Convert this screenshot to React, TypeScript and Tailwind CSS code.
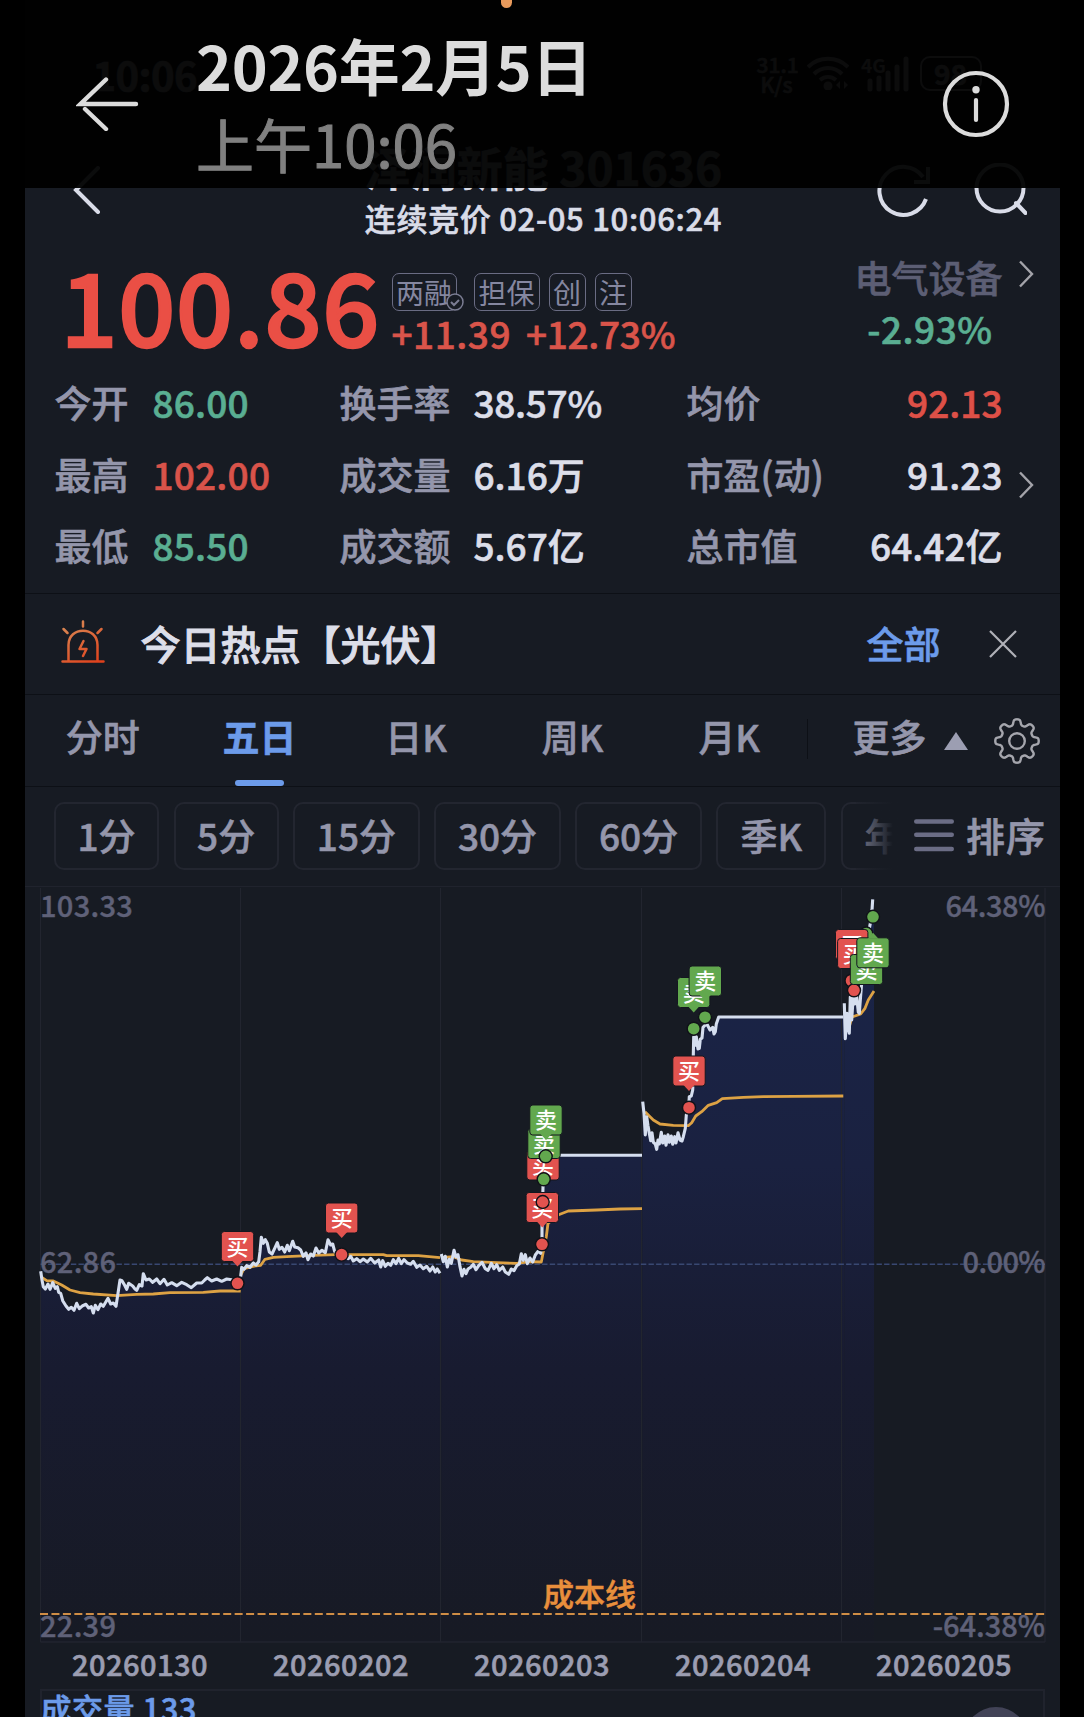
import type { ReactNode } from "react";
import clsx from "clsx";

type Point = [number, number];

type Day = {
  origin: Point;
  price: Point[];
  average: Point[];
};

type Marker = {
  side: "buy" | "sell";
  x: number;
  y: number;
  tip?: "up" | "down" | "none";
};

const CHART_BOTTOM = 1642;
const GRID_X = [40.5, 240.5, 440.5, 641.5, 841.5, 1045];

// points are stored in thirds of a pixel, counted from the day's origin
const days: Day[] = [
  {
    origin: [20, 1180],
    price: [
      [62, 274], [66, 300], [70, 320], [76, 327], [84, 312], [90, 328], [98, 308], [106, 325], [112, 320],
      [116, 337], [122, 340], [128, 362], [138, 378], [146, 388], [154, 382], [162, 391], [170, 370], [178, 386],
      [188, 377], [198, 373], [206, 384], [214, 380], [220, 399], [226, 376], [234, 389], [242, 372], [250, 379],
      [264, 355], [272, 372], [280, 369], [288, 379], [294, 340], [300, 300], [306, 302], [314, 316], [320, 328],
      [326, 310], [338, 318], [344, 326], [350, 331], [358, 314], [366, 318], [370, 281], [378, 300], [388, 297],
      [398, 307], [410, 297], [420, 311], [432, 298], [442, 315], [455, 308], [470, 317], [485, 307], [500, 314],
      [514, 323], [530, 309], [545, 309], [554, 300], [562, 293], [575, 303], [590, 297], [605, 304], [620, 297],
      [640, 300], [655, 300],
    ],
    average: [
      [62, 290], [80, 302], [100, 303], [125, 315], [150, 330], [180, 338], [220, 342], [290, 347], [350, 343],
      [400, 342], [450, 338], [550, 337], [600, 333], [662, 333],
    ],
  },
  {
    origin: [20, 1180],
    price: [
      [662, 290], [665, 262], [672, 268], [680, 257], [690, 262], [700, 249], [708, 255], [716, 245], [720, 215],
      [724, 172], [730, 190], [736, 179], [742, 190], [748, 216], [756, 222], [764, 205], [772, 188], [778, 208],
      [786, 202], [794, 216], [802, 196], [808, 212], [818, 184], [824, 201], [834, 203], [842, 210], [850, 229],
      [858, 219], [864, 239], [872, 222], [880, 228], [888, 204], [896, 219], [906, 211], [916, 218], [924, 179],
      [932, 195], [938, 192], [944, 215], [965, 225], [985, 236], [992, 229], [1000, 243], [1010, 236], [1020, 245],
      [1030, 237], [1042, 246], [1052, 235], [1064, 249], [1076, 240], [1082, 261], [1088, 242], [1096, 259],
      [1104, 250], [1112, 256], [1120, 239], [1128, 251], [1136, 235], [1144, 251], [1152, 239], [1162, 249],
      [1172, 253], [1180, 244], [1190, 262], [1200, 255], [1210, 266], [1220, 259], [1230, 273], [1238, 261],
      [1246, 276], [1252, 267], [1260, 280],
    ],
    average: [
      [662, 285], [672, 266], [700, 259], [722, 256], [735, 238], [760, 232], [800, 230], [880, 226], [945, 224],
      [1090, 224], [1100, 227], [1195, 227], [1260, 233],
    ],
  },
  {
    origin: [330, 1080],
    price: [
      [334, 522], [340, 545], [346, 529], [352, 561], [358, 538], [364, 550], [372, 511], [378, 531], [384, 524],
      [390, 560], [396, 588], [402, 568], [408, 581], [414, 567], [422, 562], [430, 553], [438, 569], [446, 557],
      [456, 547], [466, 566], [474, 571], [484, 550], [492, 566], [500, 554], [508, 571], [518, 561], [526, 576],
      [536, 583], [544, 567], [552, 572], [560, 557], [568, 552], [574, 521], [580, 541], [586, 524], [592, 551],
      [600, 534], [608, 546], [616, 525], [624, 514], [632, 520], [636, 493], [636, 440], [639, 320], [644, 229],
      [650, 226], [936, 226],
    ],
    average: [
      [334, 533], [370, 530], [395, 540], [430, 545], [500, 548], [560, 550], [600, 545], [634, 546], [639, 520],
      [649, 470], [654, 430], [686, 404], [715, 393], [800, 390], [870, 387], [936, 386],
    ],
  },
  {
    origin: [630, 940],
    price: [
      [38, 485], [42, 520], [46, 585], [50, 530], [54, 557], [58, 580], [62, 602], [66, 578], [70, 607], [76, 612],
      [80, 628], [84, 600], [88, 612], [94, 577], [98, 609], [104, 588], [108, 616], [114, 584], [118, 607],
      [124, 588], [128, 613], [134, 590], [138, 609], [144, 578], [150, 600], [156, 603], [160, 590], [166, 565],
      [169, 525], [176, 503], [178, 470], [184, 468], [188, 450], [190, 400], [190, 345], [191, 290], [195, 316],
      [199, 290], [204, 327], [208, 325], [211, 298], [216, 294], [219, 262], [226, 255], [232, 254], [240, 270],
      [248, 262], [252, 282], [256, 275], [259, 252], [266, 231], [640, 231],
    ],
    average: [
      [45, 515], [60, 530], [70, 540], [90, 552], [130, 556], [175, 557], [185, 548], [197, 528], [215, 515],
      [235, 496], [260, 488], [277, 476], [340, 472], [400, 470], [490, 469], [640, 468],
    ],
  },
  {
    origin: [800, 880],
    price: [
      [133, 370], [136, 476], [141, 400], [144, 440], [148, 460], [151, 350], [155, 420], [160, 345], [164, 372],
      [170, 350], [175, 396], [178, 400], [182, 345], [190, 250], [200, 190], [211, 130], [216, 90], [218, 58],
    ],
    average: [[148, 440], [156, 411], [182, 402], [195, 385], [205, 360], [222, 333]],
  },
];

// y is the top edge of the flag
const flags: Marker[] = [
  { side: "buy", x: 237.5, y: 1231.5 },
  { side: "buy", x: 341.7, y: 1203 },
  { side: "buy", x: 542.3, y: 1192.5 },
  { side: "buy", x: 543, y: 1150, tip: "none" },
  { side: "sell", x: 544, y: 1128.5, tip: "none" },
  { side: "sell", x: 546, y: 1105 },
  { side: "buy", x: 689, y: 1056 },
  { side: "sell", x: 693.7, y: 977.5 },
  { side: "sell", x: 705.3, y: 966 },
];

const lateFlags: Marker[] = [
  { side: "buy", x: 851.7, y: 929.5, tip: "none" },
  { side: "buy", x: 853.8, y: 938.5, tip: "none" },
  { side: "sell", x: 866.5, y: 954.5, tip: "none" },
  { side: "sell", x: 873, y: 937.8, tip: "up" },
];

const dots: Marker[] = [
  { side: "buy", x: 237.5, y: 1283.3 },
  { side: "buy", x: 341.6, y: 1254.6 },
  { side: "buy", x: 542, y: 1244.3 },
  { side: "buy", x: 542.7, y: 1202 },
  { side: "sell", x: 543.7, y: 1179.3 },
  { side: "sell", x: 545.7, y: 1156.3 },
  { side: "buy", x: 689, y: 1107.7 },
  { side: "sell", x: 693.7, y: 1028.7 },
  { side: "sell", x: 705, y: 1017.2 },
];

const lateDots: Marker[] = [
  { side: "buy", x: 851.5, y: 980.7 },
  { side: "buy", x: 854, y: 990.3 },
  { side: "sell", x: 866.3, y: 933.5 },
  { side: "sell", x: 873, y: 916.8 },
];

const fills = { buy: "#e2534f", sell: "#62a84e" };

function toPath(points: Point[], [ox, oy]: Point) {
  return points
    .map(([x, y], i) => `${i ? "L" : "M"}${(ox + x / 3).toFixed(1)} ${(oy + y / 3).toFixed(1)}`)
    .join("");
}

function firstX({ origin, price }: Day) {
  return origin[0] + price[0][0] / 3;
}

function toArea(day: Day, index: number) {
  const next = days[index + 1];
  const right = next ? firstX(next) : 874;
  return `${toPath(day.price, day.origin)}H${right}V${CHART_BOTTOM}H${firstX(day)}Z`;
}

function Flag({ side, x, y, tip = "down" }: Marker) {
  return (
    <g>
      <rect x={x - 16.2} y={y} width="32.4" height="30" rx="3" fill={fills[side]} stroke="#14171f" strokeWidth="1" />
      {tip === "down" && <path d={`M${x - 5.5} ${y + 29}l5.5 6l5.5 -6z`} fill={fills[side]} />}
      {tip === "up" && <path d={`M${x - 5.5} ${y + 1}l5.5 -6l5.5 6z`} fill={fills[side]} />}
      <text x={x} y={y + 23} fontSize="22" fontWeight="500" textAnchor="middle" fill="#fff">
        {side === "buy" ? "买" : "卖"}
      </text>
    </g>
  );
}

function Dot({ side, x, y }: Marker) {
  return <circle cx={x} cy={y} r="6.5" fill={fills[side]} stroke="#101218" strokeWidth="1.4" />;
}

function Chevron({ className }: { className?: string }) {
  return (
    <svg viewBox="0 0 16 28" className={clsx("h-7 w-4", className)} fill="none" stroke="#a3a3a9" strokeWidth="2.4">
      <path d="M2 1.5L14 14L2 26.5" />
    </svg>
  );
}

function StatusBar() {
  return (
    <div className="flex h-[132px] shrink-0 items-start justify-between pr-[78px] pl-[68px] text-[#dfe2ec]">
      <span className="mt-[46px] text-[40px] leading-[56px] font-bold tracking-[-0.6px]">10:06</span>
      <div className="mt-[54px] flex items-start">
        <div className="mr-2.5 w-10 text-center text-[21px] leading-5 font-medium">
          <div>31.1</div>
          <div>K/s</div>
        </div>
        <svg viewBox="0 0 42 36" className="mr-3 h-9 w-[42px]" fill="none" stroke="currentColor" strokeWidth="4">
          <path d="M1 13C12 2 30 2 41 13M7 20C15 12 27 12 35 20M13 26C18 22 24 22 29 26" />
          <circle cx="21" cy="32" r="2.5" fill="currentColor" />
          <path d="M33 27v8l-4 -4zM37 27v8l4 -4z" fill="currentColor" stroke="none" />
        </svg>
        <svg viewBox="0 0 49 38" className="mr-2.5 h-[38px] w-[49px]" fill="none" stroke="currentColor" strokeWidth="5">
          <text x="0" y="19" fontSize="19" fontWeight="700" fill="currentColor" stroke="none">
            4G
          </text>
          <path d="M9 27V35M18 24V35M27 19V35M36 13V35M45 5V35" strokeLinecap="round" />
        </svg>
        <div className="mt-0.5 h-[35px] w-[62px] rounded-[10px] border-2 border-current text-center text-[28px] leading-[30px] font-bold">
          98
        </div>
      </div>
    </div>
  );
}

function NavBar() {
  return (
    <div className="grid h-[114px] shrink-0 grid-cols-[1fr_auto_1fr] items-center pr-[33px] pl-[48px] text-[#d9dce8]">
      <svg viewBox="0 0 28 48" className="h-12 w-7" fill="none" stroke="currentColor" strokeWidth="4" strokeLinecap="round">
        <path d="M25 2L3 24L25 46" />
      </svg>
      <div className="mr-[12px] pt-[11px] text-center">
        <h1 className="text-[46px] leading-[46px] font-bold whitespace-nowrap">泽润新能 301636</h1>
        <p className="text-[31px] leading-[58px] font-medium tracking-[0.7px] whitespace-nowrap">
          连续竞价 02-05 10:06:24
        </p>
      </div>
      <div className="flex items-center justify-end gap-[43px]">
        <svg viewBox="0 0 54 54" className="h-[54px] w-[54px]" fill="none" stroke="currentColor" strokeWidth="4">
          <path d="M50 36A24 24 0 1 1 47 14" />
          <path d="M52 4V19H38" />
        </svg>
        <svg viewBox="0 0 54 54" className="h-[54px] w-[54px]" fill="none" stroke="currentColor" strokeWidth="4">
          <circle cx="27" cy="25" r="23.5" />
          <path d="M43 40L52.5 50" strokeLinecap="round" />
        </svg>
      </div>
    </div>
  );
}

function Tag({ children, className }: { children: ReactNode; className?: string }) {
  return (
    <span
      className={clsx(
        "relative flex h-[38px] items-center justify-center rounded-[7px] border-[1.5px] border-[#6a6c83] text-[28px] leading-none font-normal text-[#8587a0] [-webkit-text-stroke-width:0]",
        className
      )}
    >
      {children}
    </span>
  );
}

const stats = [
  ["今开", "86.00", "text-[#5aae92]", "换手率", "38.57%", "均价", "92.13", "text-[#de5047]"],
  ["最高", "102.00", "text-[#d9534a]", "成交量", "6.16万", "市盈(动)", "91.23", "text-[#dcdee9]"],
  ["最低", "85.50", "text-[#5aae92]", "成交额", "5.67亿", "总市值", "64.42亿", "text-[#dcdee9]"],
];

function Quote() {
  return (
    <section className="relative h-[348px] shrink-0 border-b border-[#0d1016]">
      <div className="flex h-[121px] pl-[36px]">
        <div className="w-[331px] text-[100px] leading-[115px] font-medium tracking-[0.8px] text-[#ea4f45] [-webkit-text-stroke-width:2.4px]">
          100.86
        </div>
        <div className="pt-[27px]">
          <div className="flex gap-[9px]">
            <Tag className="w-[65px]">
              两融
              <svg viewBox="0 0 18 18" className="absolute -right-2 -bottom-px h-[18px] w-[18px]" fill="#171b23" stroke="#7b7d93" strokeWidth="1.5">
                <circle cx="9" cy="9" r="8" />
                <path d="M5 9l3 3l5 -5" fill="none" strokeWidth="2" />
              </svg>
            </Tag>
            <Tag className="ml-2 w-[66px]">担保</Tag>
            <Tag className="w-[37px]">创</Tag>
            <Tag className="w-[37px]">注</Tag>
          </div>
          <div className="flex gap-[15px] text-[37px] leading-[44px] font-medium text-[#d9544a]">
            <span className="tracking-[0.5px]">+11.39</span>
            <span className="tracking-[-0.3px]">+12.73%</span>
          </div>
        </div>
        <div className="mr-[57px] ml-auto pt-3 text-right">
          <div className="text-[37px] leading-[38px] font-medium text-[#5c5e74]">电气设备</div>
          <div className="mr-[10px] text-[37px] leading-[64px] font-medium tracking-[0.5px] text-[#5aae92]">-2.93%</div>
        </div>
      </div>
      <div className="pr-[57px] pl-[30px]">
        {stats.map(([l1, v1, c1, l2, v2, l3, v3, c3]) => (
          <div
            key={l1}
            className="grid h-[71.6px] grid-cols-[98px_187px_134px_213px_auto_1fr] items-center text-[37px] leading-none font-medium whitespace-nowrap text-[#dcdee9]"
          >
            <span className="text-[#9496ab]">{l1}</span>
            <span className={clsx("tracking-[0.2px]", c1)}>{v1}</span>
            <span className="text-[#9496ab]">{l2}</span>
            <span className={clsx(v2.endsWith("%") && "tracking-[-0.3px]")}>{v2}</span>
            <span className="text-[#9496ab]">{l3}</span>
            <span className={clsx("text-right", c3)}>{v3}</span>
          </div>
        ))}
      </div>
      <Chevron className="absolute top-[14px] right-[26px]" />
      <Chevron className="absolute top-[225px] right-[26px]" />
    </section>
  );
}

function HotTopic() {
  return (
    <section className="flex h-[101px] shrink-0 items-center border-b border-[#0d1016] pr-[43px] pl-[36px]">
      <svg viewBox="0 0 44 44" className="mr-[36px] mb-1 h-11 w-11" fill="none" stroke="url(#alarm)" strokeWidth="2.5" strokeLinecap="round">
        <defs>
          <linearGradient id="alarm" gradientUnits="userSpaceOnUse" x1="10" y1="0" x2="34" y2="44">
            <stop offset="0" stopColor="#d98a55" />
            <stop offset="1" stopColor="#e0411c" />
          </linearGradient>
        </defs>
        <path d="M1.5 41.5H42.5M7.5 41V25C7.5 6 36.5 6 36.5 25V41M22 1.5V6.5M2.5 9L6.5 13M40.5 9L36.5 13" />
        <path d="M22.5 21L18.5 29H25.5L22 36" strokeLinejoin="round" />
      </svg>
      <h2 className="pb-0.5 text-[40px] leading-none font-medium text-[#dcdee9] [-webkit-text-stroke-width:1px]">
        今日热点【光伏】
      </h2>
      <span className="mr-[48px] ml-auto pb-0.5 text-[37px] leading-none font-medium text-[#6c9bea]">全部</span>
      <svg viewBox="0 0 28 28" className="h-7 w-7" fill="none" stroke="#b0b1b8" strokeWidth="2.2">
        <path d="M1 1L27 27M27 1L1 27" />
      </svg>
    </section>
  );
}

function gearPath() {
  // eight rounded teeth around a circle
  const points: string[] = [];
  for (let i = 0; i <= 160; i++) {
    const angle = (i / 160) * Math.PI * 2;
    const wave = Math.cos(angle * 8);
    const radius = 18.9 + 2.9 * Math.tanh(wave * 2);
    points.push(`${(24 + radius * Math.sin(angle)).toFixed(2)} ${(24 - radius * Math.cos(angle)).toFixed(2)}`);
  }
  return `M${points.join("L")}Z`;
}

function Tabs() {
  return (
    <nav className="flex h-[92px] shrink-0 items-center border-b border-[#0d1016] pr-[19px] text-[37px] leading-none font-medium text-[#9496ab]">
      {["分时", "五日", "日K", "周K", "月K"].map((tab) => (
        <div
          key={tab}
          className={clsx(
            "relative flex h-full w-[156.6px] items-center justify-center pb-2",
            tab === "五日" && "font-bold text-[#6c9bea]"
          )}
        >
          {tab}
          {tab === "五日" && <span className="absolute bottom-0 h-1.5 w-[49px] rounded-[3px] bg-[#6c9bea]" />}
        </div>
      ))}
      <span className="-mt-1 h-10 w-px bg-[#0d1016]" />
      <span className="mr-[17px] ml-auto pb-2">更多</span>
      <svg viewBox="0 0 24 18" className="mr-[25px] h-[18px] w-6" fill="#9c9eb2">
        <path d="M12 0L24 18H0Z" />
      </svg>
      <svg viewBox="0 0 48 48" className="h-12 w-12" fill="none" stroke="#a5a6ad" strokeWidth="2.4">
        <path d={gearPath()} strokeLinejoin="round" />
        <circle cx="24" cy="24" r="7.8" />
      </svg>
    </nav>
  );
}

const periods = [
  { label: "1分", width: "w-[105px]" },
  { label: "5分", width: "w-[105px]" },
  { label: "15分", width: "w-[126.5px]" },
  { label: "30分", width: "w-[126.5px]" },
  { label: "60分", width: "w-[126.5px]" },
  { label: "季K", width: "w-[109.5px]" },
  { label: "年K", width: "w-[109.5px]" },
];

function Periods() {
  return (
    <div className="flex h-[100px] shrink-0 items-start border-b border-[#20232d] pt-[15px] pl-[29.5px] text-[37px] leading-none font-medium text-[#9496ab]">
      <div className="relative flex w-[848px] gap-[14.6px] overflow-hidden">
        {periods.map(({ label, width }) => (
          <div
            key={label}
            className={clsx(
              "flex h-[68px] shrink-0 items-center justify-center rounded-[10px] border-2 border-[#232630] pb-0.5",
              width
            )}
          >
            {label}
          </div>
        ))}
        <div className="absolute inset-y-0 right-0 w-[46px] bg-linear-to-r from-[#171b23]/20 to-[#171b23] to-80%" />
      </div>
      <div className="ml-3 flex h-[66px] items-center gap-[12px]">
        <svg viewBox="0 0 40 34" className="h-[34px] w-10" stroke="#6b6d85" strokeWidth="4.4" strokeLinecap="round">
          <path d="M2.2 3.5H37.8M2.2 16.8H37.8M2.2 31H37.8" />
        </svg>
        <span className="pb-0.5 text-[39px] leading-none tracking-[1px]">排序</span>
      </div>
    </div>
  );
}

function Chart() {
  return (
    <svg viewBox="25 887 1035 757" className="h-[757px] w-[1035px] shrink-0" fill="none">
      <defs>
        <linearGradient id="area" gradientUnits="userSpaceOnUse" x1="0" y1="960" x2="0" y2={CHART_BOTTOM}>
          <stop offset="0" stopColor="#1a2447" />
          <stop offset="0.3" stopColor="#1a2140" />
          <stop offset="0.6" stopColor="#181b30" />
          <stop offset="1" stopColor="#171a24" />
        </linearGradient>
      </defs>
      {days.map((day, i) => (
        <path key={i} d={toArea(day, i)} fill="url(#area)" />
      ))}
      <path d={GRID_X.map((x) => `M${x} 888V${CHART_BOTTOM}`).join("")} stroke="#22252f" strokeWidth="1.2" />
      <path d={`M40.5 ${CHART_BOTTOM}H1045`} stroke="#22252f" strokeWidth="1.6" />
      <path d="M40.5 1264.2H1045" stroke="#394872" strokeWidth="1.6" strokeDasharray="5.4 2.2" />
      <g fontSize="29" fontWeight="500" fill="#5f6178" stroke="#5f6178" strokeWidth="0.4">
        <text x="40" y="1273" letterSpacing="0.3">62.86</text>
        <text x="1045" y="1273" textAnchor="end" letterSpacing="-0.6">0.00%</text>
        <text x="40" y="917" letterSpacing="0.3">103.33</text>
        <text x="1045" y="917" textAnchor="end" letterSpacing="-0.4">64.38%</text>
        <text x="40" y="1636.7" letterSpacing="0.3">22.39</text>
        <text x="1045" y="1636.7" textAnchor="end">-64.38%</text>
      </g>
      <path d="M40 1614H1045" stroke="#cf8d45" strokeWidth="2" strokeDasharray="8 3.45" />
      <text x="543" y="1605.5" fontSize="31" fontWeight="500" fill="#e88f3c" stroke="#e88f3c" strokeWidth="0.5">
        成本线
      </text>
      {days.map(({ average, origin }, i) => (
        <path key={i} d={toPath(average, origin)} stroke="#dda244" strokeWidth="2.8" strokeLinejoin="round" />
      ))}
      {days.map(({ price, origin }, i) => (
        <path key={i} d={toPath(price, origin)} stroke="#d5deef" strokeWidth="3.1" strokeLinejoin="round" />
      ))}
      {flags.map((flag, i) => (
        <Flag key={i} {...flag} />
      ))}
      {dots.map((dot, i) => (
        <Dot key={i} {...dot} />
      ))}
      {lateDots.map((dot, i) => (
        <Dot key={i} {...dot} />
      ))}
      {lateFlags.map((flag, i) => (
        <Flag key={i} {...flag} />
      ))}
    </svg>
  );
}

function TopBar() {
  return (
    <header className="absolute inset-x-0 top-0 flex h-[188px] bg-black/95 pt-[31px] pl-[76px]">
      <svg viewBox="0 0 64 54" className="mt-[46px] mr-[56px] h-[54px] w-16" fill="none" stroke="#dcdcdc" strokeWidth="4.4" strokeLinecap="round">
        <path d="M30 2.5L4.5 27H60" />
        <path d="M9 32L30 52" />
      </svg>
      <div className="whitespace-nowrap">
        <div className="text-[61px] leading-[68px] font-bold tracking-[-0.3px] text-[#dcdcdc]">2026年2月5日</div>
        <div className="text-[58px] leading-[88px] text-[#808080] [-webkit-text-stroke-width:1px]">上午10:06</div>
      </div>
      <svg viewBox="0 0 68 68" className="mt-[39px] mr-[74px] ml-auto h-[68px] w-[68px]" fill="none" stroke="#dcdcdc" strokeWidth="4.2">
        <circle cx="34" cy="34" r="31" />
        <circle cx="34" cy="19.7" r="3.7" fill="#dcdcdc" stroke="none" />
        <path d="M34 30V50" strokeLinecap="round" />
      </svg>
      <span className="absolute top-0 left-[500.5px] h-2 w-[11px] rounded-b-full bg-[#e89a5c]" />
    </header>
  );
}

export default function App() {
  return (
    <div
      className="relative h-[1717px] w-[1084px] overflow-hidden bg-black px-[24.5px]"
      style={{ fontFamily: '"Noto Sans CJK SC", sans-serif' }}
    >
      <main className="flex h-full w-[1035px] flex-col overflow-hidden bg-[#171b23] [-webkit-text-stroke-width:0.6px]">
        <StatusBar />
        <NavBar />
        <Quote />
        <HotTopic />
        <Tabs />
        <Periods />
        <Chart />
        <div className="ml-[15px] grid h-[45px] w-[1005px] shrink-0 grid-cols-5 pb-[6px] text-center text-[29px] leading-[39px] font-medium tracking-[0.5px] text-[#9b9db1]">
          {["20260130", "20260202", "20260203", "20260204", "20260205"].map((date) => (
            <span key={date}>{date}</span>
          ))}
        </div>
        <section className="relative ml-[15px] h-20 w-[1005px] shrink-0 border-2 border-[#20232d]">
          <span className="-ml-px block text-[31px] leading-[33px] font-medium tracking-[0.5px] whitespace-pre text-[#6c9bea]">
            成交量 133
          </span>
          <span className="absolute top-4 right-[15px] h-16 w-16 rounded-full bg-[#424357]" />
        </section>
      </main>
      <TopBar />
    </div>
  );
}
